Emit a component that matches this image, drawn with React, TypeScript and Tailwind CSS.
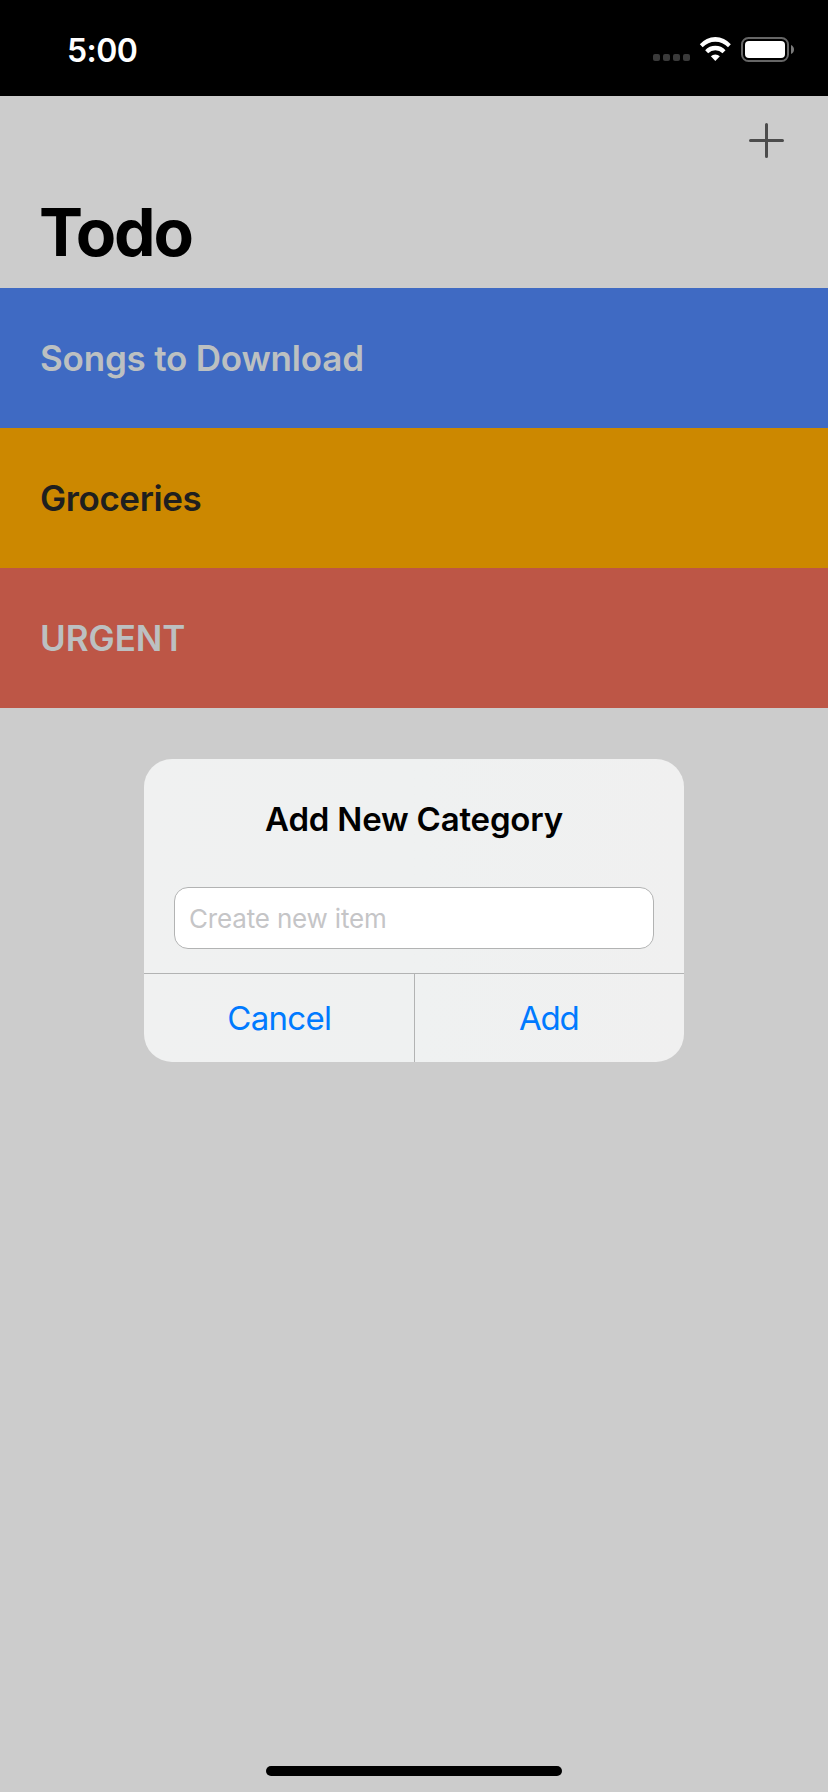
import type { ReactNode } from 'react';

type Category = { name: string; row: string; label: string };

const categories: Category[] = [
  { name: 'Songs to Download', row: 'bg-[#3f6ac3]', label: 'text-[#bcc0c1] tracking-[-0.2px]' },
  { name: 'Groceries', row: 'bg-[#cc8800]', label: 'text-[#1f1f1f] tracking-[-0.42px]' },
  { name: 'URGENT', row: 'bg-[#bd5646]', label: 'text-[#bcc0c1] tracking-[-0.05px]' },
];

function WifiIcon() {
  return (
    <svg className="ml-[9px] h-[26px] w-[33px]" viewBox="177 48 99 78" fill="#fff" aria-hidden="true">
      <path d="M179.500 73 A60 60 0 0 1 272.500 73 L264 82 A51 51 0 0 0 188 82 Z" />
      <path d="M195.500 91 A40 40 0 0 1 256.500 91 L247.500 100 A30 30 0 0 0 204.500 100 Z" />
      <path d="M212.500 109 A19 19 0 0 1 239.500 109 L226 123 Z" />
    </svg>
  );
}

function BatteryIcon() {
  return (
    <svg className="ml-[9px] h-[26px] w-[54px]" viewBox="0 0 54 26" aria-hidden="true">
      <rect x="1" y="2" width="46" height="23" rx="6.500" fill="none" stroke="#666" strokeWidth="2" />
      <rect x="4" y="5" width="40" height="17" rx="4" fill="#fff" />
      <path d="M50 9 Q53 10.500 53 13.500 Q53 16.500 50 18 Z" fill="#7a7a7a" />
    </svg>
  );
}

function StatusBar() {
  return (
    <header className="flex h-24 shrink-0 items-start justify-between bg-black pl-[67px] pr-[33px]">
      <time className="mt-[31px] text-[32px] font-semibold leading-10 tracking-[-0.6px] text-white">5:00</time>
      <div className="mt-9 flex items-start">
        <div className="mt-[18px] flex gap-[3px]">
          {[0, 1, 2, 3].map((dot) => (
            <span key={dot} className="size-[7px] rounded-[2px] bg-[#3a3a3a]" />
          ))}
        </div>
        <WifiIcon />
        <BatteryIcon />
      </div>
    </header>
  );
}

function DialogButton({ children }: { children: ReactNode }) {
  return (
    <button type="button" className="flex-1 text-[33px] font-normal leading-none text-[#007aff]">
      {children}
    </button>
  );
}

function AddCategoryDialog() {
  return (
    <section
      role="dialog"
      aria-label="Add New Category"
      className="mx-auto mt-[51px] flex h-[303px] w-[540px] shrink-0 flex-col overflow-hidden rounded-[28px] bg-linear-to-r from-[#f0f1f1] via-[#eff1f1] to-[#f0f0f0]"
    >
      <h2 className="mt-10 text-center text-[33px] font-semibold leading-10 tracking-[-0.2px] text-black">
        Add New Category
      </h2>
      <input
        type="text"
        placeholder="Create new item"
        className="mx-[30px] mt-12 h-[62px] rounded-[14px] border border-[#b2b3b3] bg-white px-[14px] text-[26px] tracking-[-0.17px] outline-none placeholder:text-[#c5c5c7]"
      />
      <div className="mt-6 flex flex-1 divide-x divide-[#b2b3b3] border-t border-[#b2b3b3]">
        <DialogButton>
          <span className="pl-px tracking-[-0.7px]">Cancel</span>
        </DialogButton>
        <DialogButton>
          <span className="pr-px tracking-[-1.2px]">Add</span>
        </DialogButton>
      </div>
    </section>
  );
}

export default function App() {
  return (
    <div className="flex h-[1792px] w-[828px] flex-col overflow-hidden bg-[#cccccc] font-[Inter,sans-serif]">
      <StatusBar />
      <nav className="flex h-[88px] shrink-0 items-start justify-end pr-11 pt-[27px]">
        <button type="button" aria-label="Add category">
          <svg className="block size-[35px]" viewBox="0 0 35 35" stroke="#4c4c4c" strokeWidth="3" strokeLinecap="round" aria-hidden="true">
            <path d="M17.500 1.500 V33.500 M1.500 17.500 H33.500" />
          </svg>
        </button>
      </nav>
      <h1 className="h-[104px] shrink-0 pl-[39px] pt-2 text-[66px] font-bold leading-[80px] tracking-[-2.2px] text-black">Todo</h1>
      <ul className="shrink-0">
        {categories.map(({ name, row, label }) => (
          <li key={name} className={`flex h-[140px] items-center pl-10 ${row}`}>
            <span className={`text-[35px] font-semibold leading-10 ${label}`}>{name}</span>
          </li>
        ))}
      </ul>
      <AddCategoryDialog />
      <div className="mx-auto mb-4 mt-auto h-[10px] w-[296px] shrink-0 rounded-full bg-black" />
    </div>
  );
}
